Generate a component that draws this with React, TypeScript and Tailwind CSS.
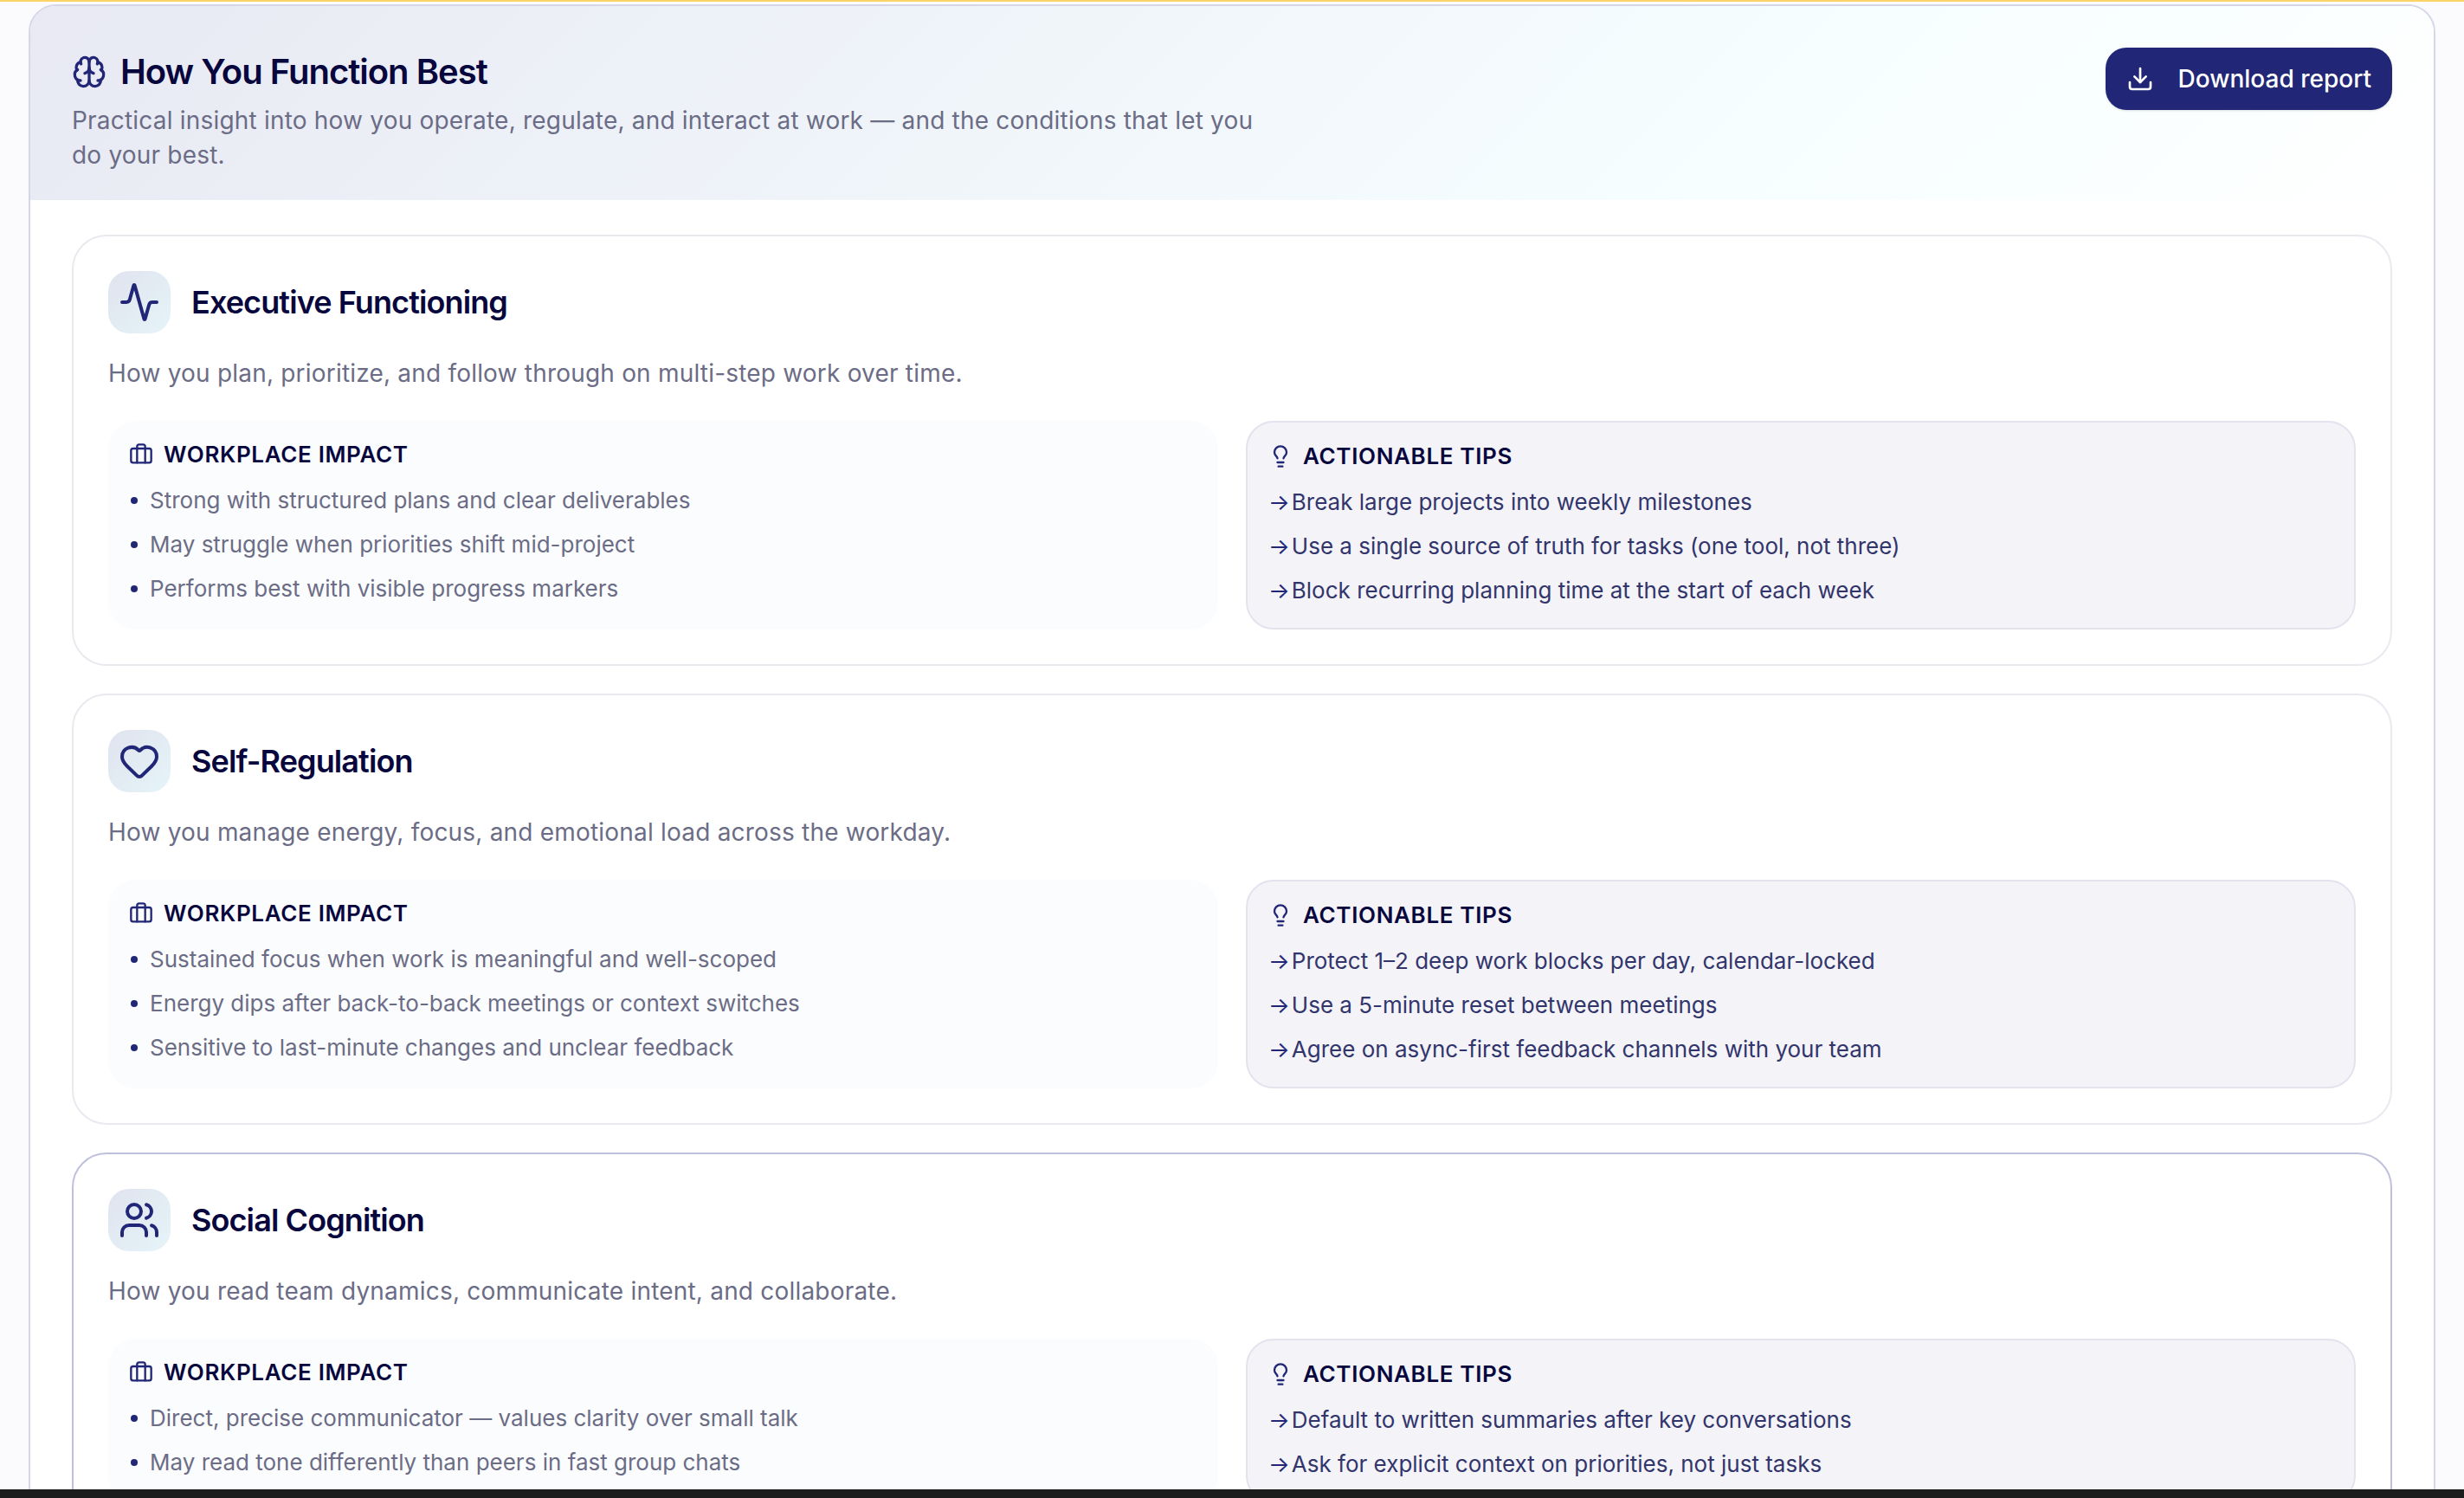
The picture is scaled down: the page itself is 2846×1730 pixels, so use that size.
import { Activity, Brain, Briefcase, Download, Heart, Lightbulb, Users } from "lucide-react";
import type { LucideIcon } from "lucide-react";

type Domain = {
  title: string;
  desc: string;
  icon: LucideIcon;
  impact: string[];
  tips: string[];
  active?: boolean;
};

const domains: Domain[] = [
  {
    title: "Executive Functioning",
    desc: "How you plan, prioritize, and follow through on multi-step work over time.",
    icon: Activity,
    impact: [
      "Strong with structured plans and clear deliverables",
      "May struggle when priorities shift mid-project",
      "Performs best with visible progress markers",
    ],
    tips: [
      "Break large projects into weekly milestones",
      "Use a single source of truth for tasks (one tool, not three)",
      "Block recurring planning time at the start of each week",
    ],
  },
  {
    title: "Self-Regulation",
    desc: "How you manage energy, focus, and emotional load across the workday.",
    icon: Heart,
    impact: [
      "Sustained focus when work is meaningful and well-scoped",
      "Energy dips after back-to-back meetings or context switches",
      "Sensitive to last-minute changes and unclear feedback",
    ],
    tips: [
      "Protect 1–2 deep work blocks per day, calendar-locked",
      "Use a 5-minute reset between meetings",
      "Agree on async-first feedback channels with your team",
    ],
  },
  {
    title: "Social Cognition",
    desc: "How you read team dynamics, communicate intent, and collaborate.",
    icon: Users,
    active: true,
    impact: [
      "Direct, precise communicator — values clarity over small talk",
      "May read tone differently than peers in fast group chats",
    ],
    tips: [
      "Default to written summaries after key conversations",
      "Ask for explicit context on priorities, not just tasks",
    ],
  },
];

function DomainCard({ domain }: { domain: Domain }) {
  const Icon = domain.icon;
  return (
    <section
      className={
        domain.active
          ? "rounded-[40px] border-2 border-[#bfc1dc] bg-white p-[40px]"
          : "rounded-[40px] border-2 border-[#e9e9f0] bg-white p-[40px]"
      }>
      <div className="flex items-center gap-[24px]">
        <div className="flex h-[72px] w-[72px] items-center justify-center rounded-[24px] bg-[linear-gradient(135deg,#e0e3ee,#e5f4f8)]">
          <Icon size={48} strokeWidth={2} className="text-[#212776]" />
        </div>
        <h3 className="text-[36px] leading-[48px] font-semibold tracking-[-0.9px] text-[#07073e]">{domain.title}</h3>
      </div>

      <p className="mt-[26px] text-[28px] leading-[40px] tracking-[0.2px] text-[#6b6c85]">{domain.desc}</p>

      <div className="mt-[35px] grid grid-cols-2 gap-[32px]">
        <div className="rounded-[32px] bg-[#fbfcfe] p-[24px]">
          <div className="flex items-center gap-[12px]">
            <Briefcase size={28} strokeWidth={2} className="text-[#212776]" />
            <span className="text-[26px] leading-[30px] font-semibold tracking-[0.65px] text-[#07073e]">WORKPLACE IMPACT</span>
          </div>
          <ul className="mt-[18px] flex flex-col gap-[12px]">
            {domain.impact.map((item) => (
              <li key={item} className="flex items-center gap-[14px] text-[26px] leading-[39px] text-[#6b6c85]">
                <span className="ml-[2px] h-[8px] w-[8px] rounded-full bg-[#212776]" />
                {item}
              </li>
            ))}
          </ul>
        </div>

        <div className="rounded-[32px] border-2 border-[#e3e3ee] bg-[#f3f3f8] p-[24px]">
          <div className="flex items-center gap-[12px]">
            <Lightbulb size={28} strokeWidth={2} className="text-[#212776]" />
            <span className="text-[26px] leading-[30px] font-semibold tracking-[0.65px] text-[#07073e]">ACTIONABLE TIPS</span>
          </div>
          <ul className="mt-[18px] flex flex-col gap-[12px]">
            {domain.tips.map((tip) => (
              <li key={tip} className="flex items-center gap-[2px] text-[26px] leading-[39px] text-[#32356b]">
                <span className="text-[#212776]">→</span>
                {tip}
              </li>
            ))}
          </ul>
        </div>
      </div>
    </section>
  );
}

export default function App() {
  return (
    <div className="flex h-[1730px] flex-col overflow-hidden bg-[#fbfbfe] font-[Inter,sans-serif]">
      <div className="h-[2px] shrink-0 bg-[#fbd468]" />
      <main className="min-h-0 flex-1 overflow-hidden px-[33px] pt-[3px]">
        <div className="overflow-hidden rounded-[32px] border-2 border-[#d5d7e8] bg-white">
          <header className="flex items-start justify-between bg-[linear-gradient(135deg,#e8e9f3_0%,#f6feff_72%,#ffffff_100%)] px-[48px] pt-[48px] pb-[32px]">
            <div>
              <div className="flex items-center gap-[16px]">
                <Brain size={40} strokeWidth={2} className="text-[#212776]" />
                <h2 className="text-[40px] leading-[56px] font-semibold tracking-[-1px] text-[#07073e]">How You Function Best</h2>
              </div>
              <p className="mt-[8px] max-w-[1370px] text-[28px] leading-[40px] tracking-[0.2px] text-[#6b6c85]">
                Practical insight into how you operate, regulate, and interact at work — and the conditions that let you do your best.
              </p>
            </div>
            <button className="flex h-[72px] items-center gap-[28px] rounded-[24px] bg-[#212776] px-[24px] text-[28px] font-medium text-white shadow-sm">
              <Download size={32} strokeWidth={2} />
              Download report
            </button>
          </header>

          <div className="flex flex-col gap-[32px] px-[48px] pt-[40px]">
            {domains.map((domain) => (
              <DomainCard key={domain.title} domain={domain} />
            ))}
          </div>
        </div>
      </main>
      <div className="h-[10px] shrink-0 bg-[#1c1c1c]" />
    </div>
  );
}
